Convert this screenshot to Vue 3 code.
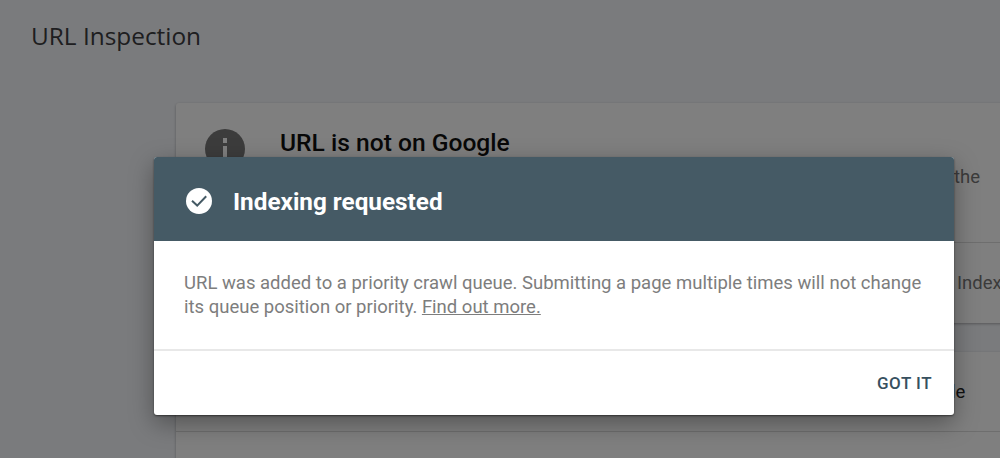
<script setup>
const bodyText = "URL was added to a priority crawl queue. Submitting a page multiple times will not change its queue position or priority.";
</script>

<template>
  <div class="page">
    <h1 class="pageTitle">URL Inspection</h1>
    <div class="content">
      <section class="card">
        <div class="statusRow">
          <span class="infoIcon">
            <svg width="40" height="40" viewBox="0 0 40 40">
              <circle cx="20" cy="20" r="20" fill="#787878" />
              <rect x="18" y="9" width="4" height="5" fill="#fff" />
              <rect x="18" y="17" width="4" height="14" fill="#fff" />
            </svg>
          </span>
          <div class="statusText">
            <h2>URL is not on Google</h2>
            <p class="tailThe">the</p>
          </div>
        </div>
        <div class="actionRow"><span class="tailIndex">Index</span></div>
      </section>
      <section class="card second">
        <div class="detailRow"><span class="tailLe">le</span></div>
        <div class="detailRow empty"></div>
      </section>
    </div>

    <div class="scrim">
      <div class="dialog">
        <header class="dialogHead">
          <svg class="checkIcon" width="26" height="26" viewBox="0 0 26 26">
            <circle cx="13" cy="13" r="13" fill="#fff" />
            <path d="M6 12.8l5.2 4.8 9-9.4" fill="none" stroke="#455a65" stroke-width="2" />
          </svg>
          <span>Indexing requested</span>
        </header>
        <div class="dialogBody">
          {{ bodyText }} <a href="#" class="more">Find out more.</a>
        </div>
        <footer class="dialogFoot">
          <button class="gotIt">GOT IT</button>
        </footer>
      </div>
    </div>
  </div>
</template>

<style>
html, body {
  margin: 0;
  overflow: hidden;
}
</style>

<style scoped>
.page {
  position: relative;
  width: 1000px;
  height: 458px;
  overflow: hidden;
  background: #f5f7fb;
  font-family: Roboto, "Liberation Sans", sans-serif;
}

.pageTitle {
  margin: 0;
  padding: 20px 0 0 31px;
  font-family: "Open Sans", Roboto, sans-serif;
  font-size: 24.4px;
  line-height: 32px;
  font-weight: 400;
  color: #3c3c40;
}

.content {
  margin: 51px 0 0 176px;
  width: 900px;
}

.card {
  background: #fff;
  box-shadow: 0 1px 3px rgba(0, 0, 0, 0.3);
  border-radius: 3px 0 0 3px;
}

.second {
  margin-top: 29px;
}

.statusRow {
  display: flex;
  height: 140px;
  box-sizing: border-box;
  padding: 26px 0 0 29px;
  border-bottom: 1px solid #ddd;
}

.infoIcon {
  width: 40px;
  height: 40px;
  margin-right: 35px;
}

.statusText h2 {
  margin: 0;
  font-size: 24.6px;
  line-height: 28px;
  font-weight: 500;
  color: #111;
}

.tailThe {
  margin: 8px 0 0 674px;
  font-size: 18.5px;
  line-height: 24px;
  color: #777;
}

.actionRow {
  height: 80px;
  padding: 28px 0 0 781px;
  box-sizing: border-box;
}

.tailIndex {
  font-size: 18.5px;
  line-height: 24px;
  color: #777;
}

.detailRow {
  height: 80px;
  padding: 28px 0 0 775px;
  box-sizing: border-box;
  border-bottom: 1px solid #ddd;
}

.detailRow.empty {
  height: 60px;
  border-bottom: 0;
}

.tailLe {
  font-size: 18.5px;
  line-height: 24px;
  color: #222;
}

.scrim {
  position: absolute;
  inset: 0;
  padding: 157px 0 0 154px;
  background: rgba(0, 0, 0, 0.5);
}

.dialog {
  width: 800px;
  border-radius: 3px;
  overflow: hidden;
  background: #fff;
  box-shadow: 0 1px 2px rgba(0, 0, 0, 0.5), 0 8px 24px rgba(0, 0, 0, 0.35);
}

.dialogHead {
  display: flex;
  align-items: center;
  height: 84px;
  padding: 4px 0 0 32px;
  box-sizing: border-box;
  background: #455a65;
  color: #fff;
  font-size: 24.3px;
  font-weight: 700;
}

.checkIcon {
  margin-right: 21px;
}

.dialogBody {
  height: 110px;
  box-sizing: border-box;
  padding: 30px 30px 0;
  font-size: 18.5px;
  line-height: 24px;
  color: #7d7d7d;
  border-bottom: 2px solid #e8e8e8;
}

.more {
  color: #7d7d7d;
}

.dialogFoot {
  display: flex;
  justify-content: flex-end;
  align-items: center;
  height: 64px;
  padding-right: 22px;
}

.gotIt {
  border: 0;
  background: none;
  padding: 0;
  font-family: inherit;
  font-size: 17px;
  font-weight: 500;
  letter-spacing: 0.5px;
  color: #37505f;
}
</style>
